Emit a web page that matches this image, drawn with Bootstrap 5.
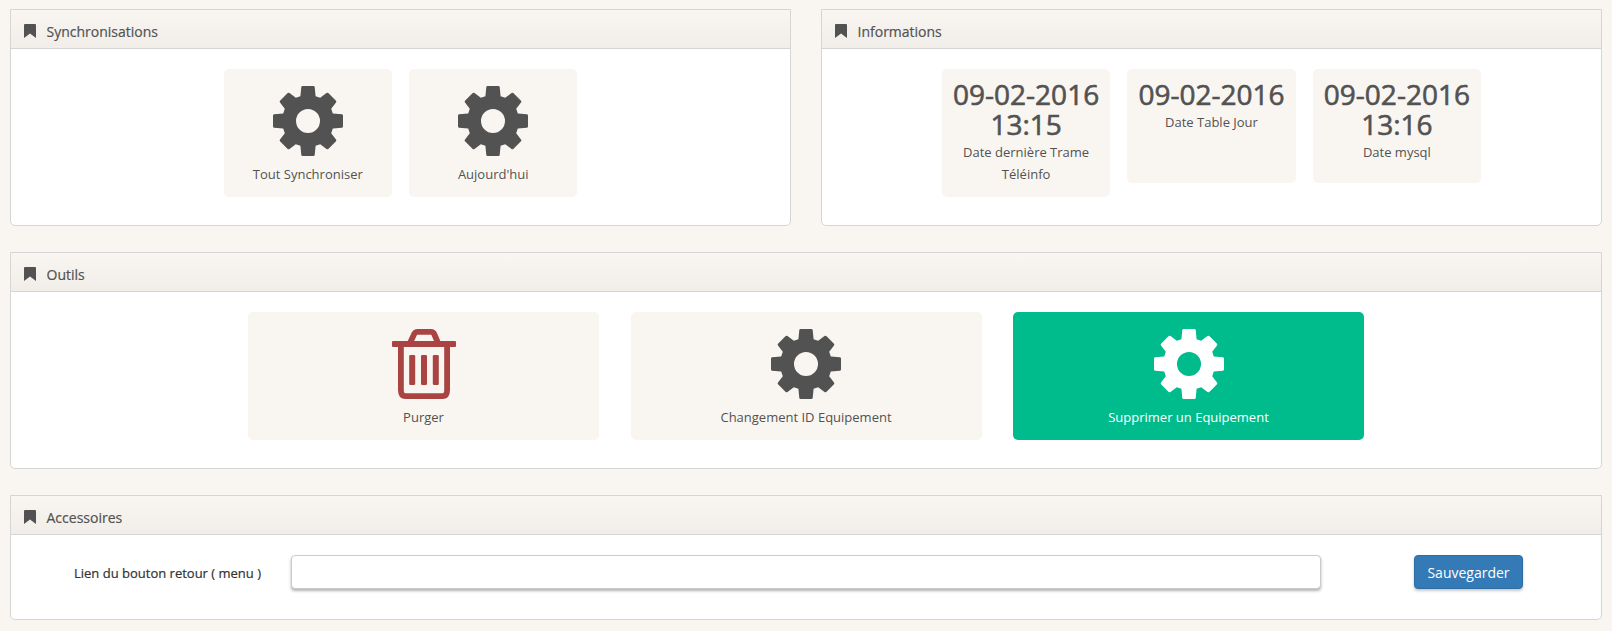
<!DOCTYPE html>
<html lang="fr">
<head>
<meta charset="utf-8">
<meta name="viewport" content="width=device-width, initial-scale=1">
<title>Outils</title>
<link rel="stylesheet" href="https://cdn.jsdelivr.net/npm/bootstrap@5.3.0/dist/css/bootstrap.min.css">
<style>
body{background:#f9f6f1;color:#333;font-family:"Open Sans",sans-serif;font-size:14px;line-height:20px;padding:9px 10px 0}
.panels{gap:26px}
.top-row{gap:30px}
.panel{flex:1;height:217px;border:1px solid #d5d5d5;border-radius:0 0 5px 5px;background:#fff}
.panel-full{flex:0 0 auto}
.panel-short{height:125px}
.panel-title{height:39px;border-bottom:1px solid #d5d5d5;background:linear-gradient(#f9f6f1,#f1eee9);color:#525252;padding:5px 0 0 13px;-webkit-text-stroke:.2px #525252}
.panel-title svg{width:12px;height:14px;margin:-1px 10.5px 0 0}
.tiles{padding-top:20px;gap:17px}
.tiles-wide{gap:31.5px}
.tile{width:168.4px;height:128px;border-radius:5px;background:#f9f6f1;color:#525252;font-size:13px;line-height:22px;text-align:center;padding-top:17px}
.tiles-wide .tile{width:351px}
.tile svg{display:block;height:70px;margin:0 auto 7px}
.tile-date{padding-top:10px}
.tile-low{height:114px}
.stamp{font-size:28px;line-height:30px;margin-bottom:2px;-webkit-text-stroke:.6px #525252}
.tile-active{background:#00bb8c;color:#fff}
.link-form{padding:20px 0 0 63px}
.link-label{width:217px;padding-top:2px;font-size:13px;-webkit-text-stroke:.2px #333;color:#333}
.link-input{width:1030px;height:34px;border:1px solid #ccc;border-radius:4px;box-shadow:0 2px 3px rgba(0,0,0,.3)}
.save{width:109px;height:34px;margin-left:93px;padding:0;background:#337ab7;border:1px solid #2e6da4;border-radius:4px;color:#fff;font-size:14px;box-shadow:0 2px 3px rgba(0,0,0,.22)}
</style>
<script src="https://cdn.jsdelivr.net/npm/bootstrap@5.3.0/dist/js/bootstrap.bundle.min.js"></script>
</head>
<body>
<svg class="d-none">
  <symbol id="gear" viewBox="-35 -35 70 70"><path fill="currentColor" fill-rule="evenodd" d="M-7.6-24.8L-6.7-34Q-6.5-35-5.5-35H5.5Q6.5-35 6.7-34L7.6-24.8L12.2-23.2L18.5-28Q19.5-28.7 20.3-28L28-20.3Q28.7-19.5 28-18.5L23.2-12.2L24.8-7.6L34-6.7Q35-6.5 35-5.5V5.5Q35 6.5 34 6.7L24.8 7.6L23.2 12.2L28 18.5Q28.7 19.5 28 20.3L20.3 28Q19.5 28.7 18.5 28L12.2 23.2L7.6 24.8L6.7 34Q6.5 35 5.5 35H-5.5Q-6.5 35-6.7 34L-7.6 24.8L-12.2 23.2L-18.5 28Q-19.5 28.7-20.3 28L-28 20.3Q-28.7 19.5-28 18.5L-23.2 12.2L-24.8 7.6L-34 6.7Q-35 6.5-35 5.5V-5.5Q-35-6.5-34-6.7L-24.8-7.6L-23.2-12.2L-28-18.5Q-28.7-19.5-28-20.3L-20.3-28Q-19.5-28.7-18.5-28L-12.2-23.2ZM12 0A12 12 0 1 0-12 0A12 12 0 1 0 12 0Z"/></symbol>
  <symbol id="bookmark" viewBox="0 0 12 14"><path fill="currentColor" d="M0 1Q0 0 1 0H11Q12 0 12 1V14L6 9.5L0 14Z"/></symbol>
  <symbol id="trash" viewBox="0 0 64 70"><g fill="none" stroke="#a94442" stroke-width="5.8"><path d="M18 14L22.2 5Q23.3 2.9 25.5 2.9H39Q41.2 2.9 42.2 5L46 14M8.9 16V61Q8.9 67.1 13.5 67.1H50.5Q55.1 67.1 55.1 61V16"/></g><g fill="#a94442"><rect y="12" width="64" height="6" rx="1"/><rect x="17.2" y="26" width="6" height="30" rx="1.3"/><rect x="29" y="26" width="6" height="30" rx="1.3"/><rect x="40.8" y="26" width="6" height="30" rx="1.3"/></g></symbol>
</svg>
<main class="panels d-flex flex-column">
  <div class="top-row d-flex">
    <section class="panel">
      <header class="panel-title d-flex align-items-center"><svg><use href="#bookmark"/></svg>Synchronisations</header>
      <div class="tiles d-flex justify-content-center">
        <div class="tile"><svg width="70"><use href="#gear"/></svg>Tout Synchroniser</div>
        <div class="tile"><svg width="70"><use href="#gear"/></svg>Aujourd'hui</div>
      </div>
    </section>
    <section class="panel">
      <header class="panel-title d-flex align-items-center"><svg><use href="#bookmark"/></svg>Informations</header>
      <div class="tiles d-flex justify-content-center">
        <div class="tile tile-date"><div class="stamp">09-02-2016<br>13:15</div>Date dernière Trame<br>Téléinfo</div>
        <div class="tile tile-date tile-low"><div class="stamp">09-02-2016</div>Date Table Jour</div>
        <div class="tile tile-date tile-low"><div class="stamp">09-02-2016<br>13:16</div>Date mysql</div>
      </div>
    </section>
  </div>
  <section class="panel panel-full">
    <header class="panel-title d-flex align-items-center"><svg><use href="#bookmark"/></svg>Outils</header>
    <div class="tiles tiles-wide d-flex justify-content-center">
      <div class="tile"><svg width="64"><use href="#trash"/></svg>Purger</div>
      <div class="tile"><svg width="70"><use href="#gear"/></svg>Changement ID Equipement</div>
      <div class="tile tile-active"><svg width="70"><use href="#gear"/></svg>Supprimer un Equipement</div>
    </div>
  </section>
  <section class="panel panel-full panel-short">
    <header class="panel-title d-flex align-items-center"><svg><use href="#bookmark"/></svg>Accessoires</header>
    <form class="link-form d-flex align-items-center">
      <label class="link-label" for="lien">Lien du bouton retour ( menu )</label>
      <input class="link-input form-control" id="lien" type="text">
      <button class="save btn btn-primary" type="button">Sauvegarder</button>
    </form>
  </section>
</main>
</body>
</html>
